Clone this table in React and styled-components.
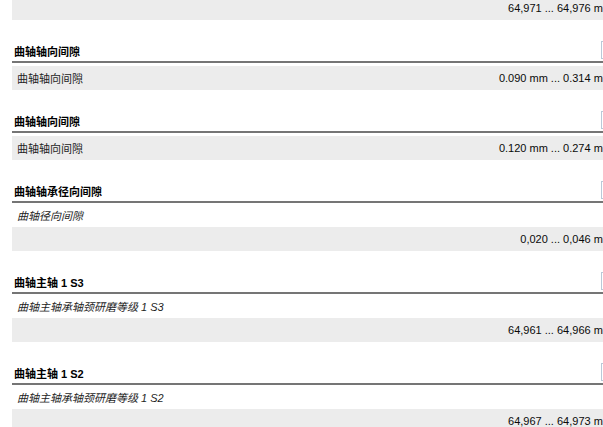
import React from "react";
import styled, { createGlobalStyle } from "styled-components";

const Global = createGlobalStyle`
  html, body { margin: 0; padding: 0; background: #fff; overflow: hidden; }
  body { font-family: "Liberation Sans", "Noto Sans CJK SC", sans-serif; }
`;

const Page = styled.div`
  width: 606px;
  margin: -4px 0 0 12px;
  display: flex;
  flex-direction: column;
`;

const Section = styled.section`
  display: flex;
  flex-direction: column;
  margin-bottom: 21px;
`;

const Header = styled.div`
  height: 20px;
  display: flex;
  align-items: center;
  justify-content: space-between;
  padding: 0 1px 0 2px;
  border-bottom: 2px solid #757575;
  margin-bottom: ${(p) => (p.$tight ? 0 : 3)}px;
`;

const Title = styled.span`
  font-size: 11px;
  font-weight: bold;
  color: #000;
`;

const Box = styled.span`
  align-self: flex-start;
  width: 14px;
  height: 16px;
  border: 1px solid #b9c9d8;
  background: #fff;
`;

const Row = styled.div`
  height: 24px;
  display: flex;
  align-items: center;
  justify-content: space-between;
  padding: 0 6px 0 5px;
  background: ${(p) => (p.$shade ? "#ececec" : "#fff")};
  font-size: 11px;
`;

const Label = styled.span`
  color: #1e1e1e;
  font-style: ${(p) => (p.$italic ? "italic" : "normal")};
`;

const Value = styled.span`
  color: #0a0a0a;
  margin-left: auto;
`;

const sections = [
  { title: "曲轴轴向间隙", label: "曲轴轴向间隙", value: "0.090 mm ... 0.314 mm", inline: true },
  { title: "曲轴轴向间隙", label: "曲轴轴向间隙", value: "0.120 mm ... 0.274 mm", inline: true },
  { title: "曲轴轴承径向间隙", label: "曲轴径向间隙", value: "0,020 ... 0,046 mm" },
  { title: "曲轴主轴 1 S3", label: "曲轴主轴承轴颈研磨等级 1 S3", value: "64,961 ... 64,966 mm" },
  { title: "曲轴主轴 1 S2", label: "曲轴主轴承轴颈研磨等级 1 S2", value: "64,967 ... 64,973 mm" },
];

export default function App() {
  return (
    <>
      <Global />
      <Page>
        <Section>
          <Row $shade>
            <Value>64,971 ... 64,976 mm</Value>
          </Row>
        </Section>
        {sections.map((s, i) => (
          <Section key={i}>
            <Header $tight={!s.inline}>
              <Title>{s.title}</Title>
              <Box />
            </Header>
            {s.inline ? (
              <Row $shade>
                <Label>{s.label}</Label>
                <Value>{s.value}</Value>
              </Row>
            ) : (
              <>
                <Row>
                  <Label $italic>{s.label}</Label>
                </Row>
                <Row $shade>
                  <Value>{s.value}</Value>
                </Row>
              </>
            )}
          </Section>
        ))}
      </Page>
    </>
  );
}
